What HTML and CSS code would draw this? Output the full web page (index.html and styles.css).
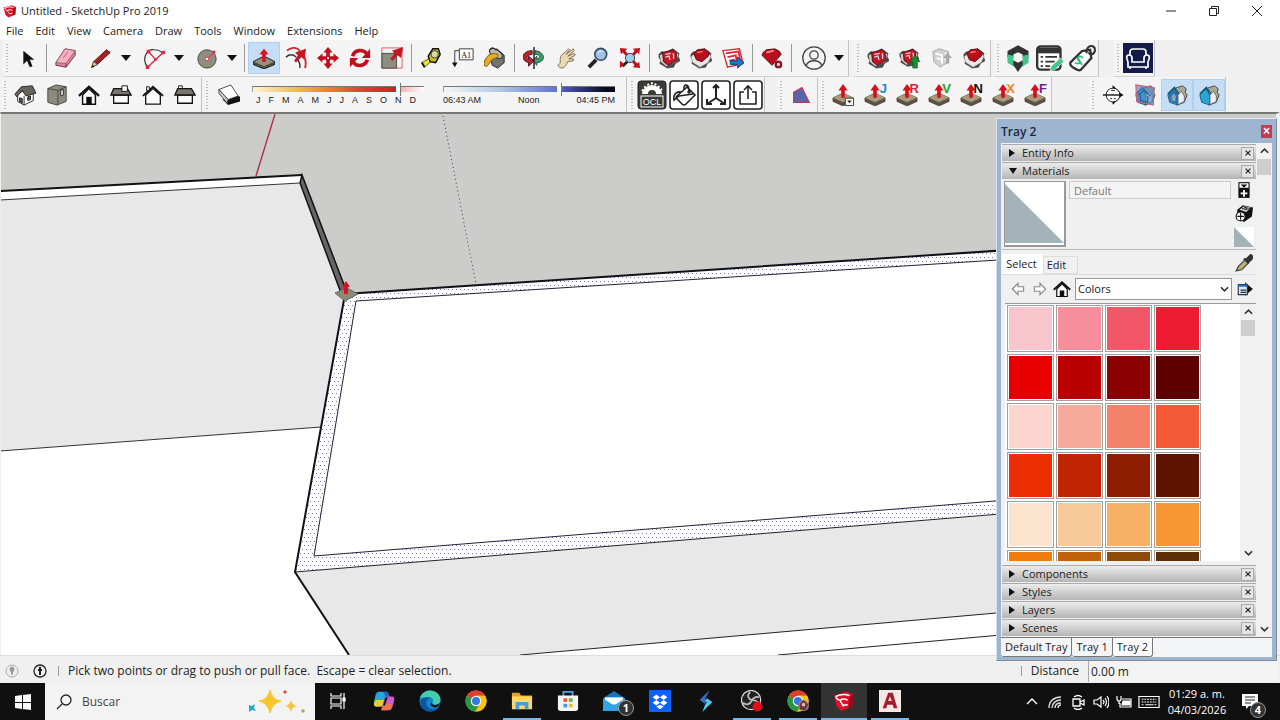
FILE: index.html
```html
<!DOCTYPE html>
<html lang="en">
<head>
<meta charset="utf-8">
<title>Untitled - SketchUp Pro 2019</title>
<link rel="stylesheet" href="styles.css">
</head>
<body>
<svg class="defs" aria-hidden="true">
  <symbol id="push" viewBox="0 0 24 24">
    <path d="M1 15l11-5 11 5v4l-11 5-11-5z" fill="#5e5342" stroke="#3c3427" stroke-width=".6"/>
    <path d="M1 15l11-5 11 5-11 5z" fill="#a8987c"/>
    <path d="M12 0l5 7h-3v8h-4V7H7z" fill="#d3111c"/>
  </symbol>
  <symbol id="warehouse" viewBox="0 0 24 24">
    <path d="M1 8l3-3 4 1 8-4 7 5-1 3 2 5-5 3-2 4-7 1-3-2-5-3 1-3-2-4z" fill="#4a4a4a" stroke="#333" stroke-width=".6"/>
    <path d="M2 9l4-2 12-3 4 4-2 8-11 5-6-5z" fill="#d2cfcc"/>
    <path d="M5 6l12-3 3 3v9l-9 5-5-4z" fill="#c01625" stroke="#5b0b12"/>
    <path d="M8 8l6-1M8 11l4-1 1 4M16 7l1 1v5" stroke="#f6d5d8" stroke-width="1.500" fill="none"/>
  </symbol>
  <symbol id="gem" viewBox="0 0 24 24">
    <path d="M1 8l3-3 4 1 8-4 7 5-1 3 2 5-5 3-2 4-7 1-3-2-5-3 1-3-2-4z" fill="#4a4a4a" stroke="#333" stroke-width=".6"/>
    <path d="M1 11l4-4 13-2 5 5-3 7-9 5-8-5z" fill="#e8e8e8" stroke="#777" stroke-width=".6"/>
    <path d="M4 7l4-4 8-1 5 4-1 4-7 6-6-2z" fill="#b80e1e" stroke="#5b0b12"/>
    <path d="M8 6l6-1" stroke="#f77" stroke-width="1.500"/>
  </symbol>
  <symbol id="home" viewBox="0 0 24 24">
    <path d="M5 12v10h14V12l-7-7z" fill="#fff" stroke="#111" stroke-width="1.600"/>
    <path d="M1 13L12 3l11 10" fill="none" stroke="#111" stroke-width="2.400"/>
    <path d="M9 22v-8h6v8z" fill="#111"/>
  </symbol>
  <symbol id="elevation" viewBox="0 0 24 24">
    <path d="M4 12h16v9H4z" fill="#fff" stroke="#111" stroke-width="1.400"/>
    <path d="M4 5h15l4 7H1z" fill="#77776c" stroke="#111" stroke-width="1.400"/>
  </symbol>
  <symbol id="section-house" viewBox="0 0 24 24">
    <path d="M9 5l9-3 4 3-1 4 2 3-3 8-8 3-2-9z" fill="#aaa794" stroke="#444"/>
    <path d="M12 13l5-5 3 5v6l-8 4z" fill="#eee" stroke="#444" stroke-width=".7"/>
    <path d="M2 12l7-7 4 8v10l-9-3z" fill="#2ba6d3" stroke="#135d80"/>
    <path d="M2 11l7-7 5 7" fill="none" stroke="#135d80" stroke-width="2"/>
  </symbol>
  <symbol id="chrome" viewBox="0 0 24 24">
    <circle cx="12" cy="12" r="11.500" fill="#fbc116"/>
    <path d="M12 12L2 6.300A11.500 11.500 0 0 1 22 6.300H12z" fill="#e33b2e"/>
    <path d="M12 12L2 6.300A11.500 11.500 0 0 0 11 23.500L17 15z" fill="#279847"/>
    <path d="M12 6.300h10a11.500 11.500 0 0 1-11 17.200l6-8.700z" fill="#fbc116"/>
    <circle cx="12" cy="12" r="5.700" fill="#fff"/><circle cx="12" cy="12" r="4.400" fill="#3477e3"/>
  </symbol>
  <symbol id="sketchup" viewBox="0 0 24 24">
    <path d="M1 6l14-4 7 3-1 13-12 5-5-5z" fill="#e01028"/>
    <path d="M18 8l4-3-1 13-4 2z" fill="#9c0716"/>
    <path d="M3 7c4-2 9-3 15-1M3 7c1 4 4 4 5 4 3-2 6-1 8 0M8 11c0 4 3 4 3 6 2-1 3-1 5-1" fill="none" stroke="#fff" stroke-width="1.600"/>
  </symbol>
  <symbol id="x" viewBox="0 0 10 10"><path d="M2 2l6 6M8 2L2 8" stroke="#222" stroke-width="1.500"/></symbol>
  <symbol id="caret" viewBox="0 0 12 8"><path d="M1 1h10L6 7z" fill="#111"/></symbol>
  <symbol id="up" viewBox="0 0 10 8"><path d="M1 6l4-4 4 4" fill="none" stroke="#333" stroke-width="1.800"/></symbol>
  <symbol id="down" viewBox="0 0 10 8"><path d="M1 2l4 4 4-4" fill="none" stroke="#333" stroke-width="1.800"/></symbol>
</svg>

<header class="titlebar">
  <svg class="app-icon"><use href="#sketchup"/></svg>
  <span class="title">Untitled - SketchUp Pro 2019</span>
  <div class="window-buttons">
    <button aria-label="Minimize"><svg viewBox="0 0 10 10"><path d="M0 5h10" stroke="#222"/></svg></button>
    <button aria-label="Restore"><svg viewBox="0 0 10 10" fill="none" stroke="#222"><path d="M.5 2.500h7v7h-7zM2.500 2.500v-2h7v7h-2"/></svg></button>
    <button aria-label="Close"><svg viewBox="0 0 10 10"><path d="M0 0l10 10M10 0L0 10" stroke="#222"/></svg></button>
  </div>
</header>
<nav class="menubar">
  <button>File</button><button>Edit</button><button>View</button><button>Camera</button><button>Draw</button><button>Tools</button><button>Window</button><button>Extensions</button><button>Help</button>
</nav>

<div class="toolrow">
  <div class="group">
    <button class="tool" aria-label="Select"><svg viewBox="0 0 24 24"><path d="M8 4v15l4-4 3 7 3-1-3-7h5z" fill="#111"/></svg></button>
    <i class="sep"></i>
    <button class="tool" aria-label="Eraser"><svg viewBox="0 0 24 24"><path d="M1 17L11 2l11 2v5L12 22 1 20z" fill="#e0829b" stroke="#653542"/><path d="M1 17L11 2l11 2-10 14z" fill="#f7b0c2" stroke="#7d4654" stroke-width=".7"/><path d="M9 12l5-7" stroke="#ba5571"/><path d="M12 18v4" stroke="#653542"/></svg></button>
    <div class="split"><button class="tool" aria-label="Line"><svg viewBox="0 0 24 24"><path d="M2 22l2-6L18 3l4 3L8 19z" fill="#aa2027" stroke="#3d1412"/><path d="M2 22l2-6 4 3z" fill="#ead3a4" stroke="#333" stroke-width=".6"/><path d="M1 23l2-3 2 1z" fill="#111"/></svg></button><button class="drop" aria-label="Line tools"><svg><use href="#caret"/></svg></button></div>
    <div class="split"><button class="tool" aria-label="Arc"><svg viewBox="0 0 24 24" fill="none"><path d="M5 22C-2 13 4 2 12 3c5 0 7 1 10 4" stroke="#333" stroke-width="1.300"/><path d="M5 22L22 6M6 5l8 9" stroke="#d42a3f" stroke-width="1.500"/><path d="M3 20h4v4H3zM20 4h4v4h-4zM4 3h4v4H4zM12 12h3v3h-3z" fill="#e12b45"/></svg></button><button class="drop" aria-label="Arc tools"><svg><use href="#caret"/></svg></button></div>
    <div class="split"><button class="tool" aria-label="Circle"><svg viewBox="0 0 24 24"><circle cx="12" cy="13" r="10" fill="#8d8e80" stroke="#44453d"/><path d="M12 13l8-7" stroke="#f04454" stroke-width="1.500"/><circle cx="12" cy="13" r="2" fill="#fff" stroke="#e12b45"/><path d="M18 4h3v3h-3z" fill="#e12b45"/></svg></button><button class="drop" aria-label="Shape tools"><svg><use href="#caret"/></svg></button></div>
    <i class="sep"></i>
    <button class="tool on" aria-label="Push/Pull"><svg viewBox="0 0 24 24"><path d="M0 16l12-6 12 6v3l-12 5-12-5z" fill="#4c4c40" stroke="#222"/><path d="M1 16l11-5 11 5-11 5z" fill="#92927f"/><path d="M12 2l5 6h-3v8h-4V8H7z" fill="#dc1220"/></svg></button>
    <button class="tool" aria-label="Offset"><svg viewBox="0 0 24 24" fill="none"><path d="M2 4C8-1 14 1 16 4M21 10c2 4 2 8 1 13" stroke="#cf2638" stroke-width="2"/><path d="M1 11c5-4 9-2 11 0M14 14c2 3 3 6 2 9" stroke="#333" stroke-width="1.600"/><path d="M10 15l4-6-3-3 12-4-2 12-3-3-6 6z" fill="#c51423"/></svg></button>
    <button class="tool" aria-label="Move"><svg viewBox="0 0 24 24" fill="#c40d1c"><path d="M12 0l5 6h-3v4h4V7l6 5-6 5v-3h-4v4h3l-5 6-5-6h3v-4H6v3l-6-5 6-5v3h4V6H7z"/><path d="M11 11h2v2h-2z" fill="#fff"/></svg></button>
    <button class="tool" aria-label="Rotate"><svg viewBox="0 0 24 24" fill="none" stroke="#c40d1c" stroke-width="4"><path d="M4 10c2-7 11-8 15-3M20 14c-2 7-11 8-15 3"/><path d="M23 2v10h-9zM1 22V12h9z" fill="#c40d1c" stroke="none"/></svg></button>
    <button class="tool" aria-label="Scale"><svg viewBox="0 0 24 24"><path d="M1 1h22v22H1z" fill="none" stroke="#dd5360"/><path d="M1 7h16v16H1z" fill="#8d8e80" stroke="#44453d"/><path d="M10 13l5-6-3-3 12-4-2 12-4-3-5 6z" fill="#c51423"/></svg></button>
    <i class="sep"></i>
    <button class="tool" aria-label="Tape Measure"><svg viewBox="0 0 24 24"><path d="M2 17l9-5 2 3-8 7z" fill="#f0e51b" stroke="#555"/><path d="M9 10l5-8 6 0 2 6-5 9-6-1z" fill="#c9c225" stroke="#111" stroke-width="1.600"/><circle cx="16" cy="8" r="4" fill="#dedaa5" stroke="#333"/><path d="M2 17l3 5" stroke="#111" stroke-width="2"/></svg></button>
    <button class="tool" aria-label="Text"><svg viewBox="0 0 24 24"><path d="M9 4H3v15" fill="none" stroke="#333"/><path d="M0 17h6l-3 5z" fill="#111"/><path d="M8 2h15v12H8z" fill="#fff" stroke="#333"/><text x="10" y="12" class="a1">A1</text></svg></button>
    <button class="tool" aria-label="Paint Bucket"><svg viewBox="0 0 24 24"><path d="M6 8l8-6 8 7v8l-7 6-6-3z" fill="#74756a" stroke="#222"/><ellipse cx="13" cy="7" rx="8" ry="4" fill="#b9b9ac" stroke="#222" transform="rotate(32 13 7)"/><path d="M15 8C8 5 0 10 0 20c5 4 5-4 10-7 4-1 6-2 5-5z" fill="#e7aa24" stroke="#7b590c"/><path d="M6 6c0-6 5-7 7-2" fill="none" stroke="#222"/></svg></button>
    <i class="sep"></i>
    <button class="tool" aria-label="Orbit"><svg viewBox="0 0 24 24" fill="none"><path d="M10 4C-2 4-3 15 6 17v4l6-6-6-5v3C3 12 4 9 10 8z" fill="#b92332" stroke="#471018"/><path d="M13 4c12 1 12 13 2 13v3l-4-5 4-5v3c5-1 4-5-2-5z" fill="#3c9c6a" stroke="#1d4d35"/><path d="M12 0v24" stroke="#222" stroke-width="1.600"/></svg></button>
    <button class="tool" aria-label="Pan"><svg viewBox="0 0 24 24"><path d="M3 20c5-2 1-7 4-11l8-7 1 1-4 5 8-6 1 2-7 6 7-3 1 2-7 4 5 0v2l-6 1c-2 4-3 7-8 7z" fill="#ead9af" stroke="#766b50"/></svg></button>
    <button class="tool" aria-label="Zoom"><svg viewBox="0 0 24 24"><path d="M2 22l8-8" stroke="#222" stroke-width="4"/><circle cx="15" cy="8" r="6.500" fill="#9cc3e4" stroke="#34495c" stroke-width="1.700"/><path d="M12 7c1-2 3-3 5-2" stroke="#fff" fill="none"/></svg></button>
    <button class="tool" aria-label="Zoom Extents"><svg viewBox="0 0 24 24"><path d="M4 21l6-6" stroke="#222" stroke-width="3"/><path d="M1 1l8 1-2 2 3 4-2 2-4-4-2 2zM23 1l-8 1 2 2-3 4 2 2 4-4 2 2zM23 23l-8-1 2-2-3-4 2-2 4 4 2-2zM1 23v-8l4 3-1 3z" fill="#c01223"/><circle cx="12" cy="12" r="5" fill="#9fd0df" stroke="#335"/></svg></button>
    <i class="sep"></i>
    <button class="tool" aria-label="3D Warehouse"><svg><use href="#warehouse"/></svg></button>
    <button class="tool" aria-label="Extension Warehouse"><svg><use href="#gem"/></svg></button>
    <button class="tool" aria-label="Send to LayOut"><svg viewBox="0 0 24 24"><path d="M1 4l18-2 4 16-17 4z" fill="#fff" stroke="#d8283b" stroke-width="1.500"/><path d="M4 7l14-2 2 10M6 11l9-2 1 6M8 15l5-1 1 5" fill="none" stroke="#d8283b" stroke-width="2"/><path d="M9 15h8v-4l7 6-7 6v-4H9z" fill="#1878c9" stroke="#0d4270"/></svg></button>
    <i class="sep"></i>
    <button class="tool" aria-label="Extension Manager"><svg viewBox="0 0 24 24"><path d="M1 9q1-4 5-6l9-1q6 2 7 6L12 20z" fill="#b80e1e" stroke="#5b0b12"/><path d="M6 6l8-2" stroke="#f88" stroke-width="2"/><circle cx="19" cy="19" r="3" fill="#ddd" stroke="#8e1320" stroke-width="2.500"/></svg></button>
    <i class="sep"></i>
    <div class="split"><button class="tool" aria-label="Account"><svg class="mid" viewBox="0 0 24 24" fill="none" stroke="#444" stroke-width="1.300"><circle cx="12" cy="12" r="11.200"/><circle cx="12" cy="9" r="4.200"/><path d="M4 20c2-7 14-7 16 0"/></svg></button><button class="drop" aria-label="Account menu"><svg><use href="#caret"/></svg></button></div>
  </div>
  <div class="group gap-s">
    <button class="tool" aria-label="Get Models"><svg><use href="#warehouse"/></svg></button>
    <button class="tool" aria-label="Share Model"><svg viewBox="0 0 24 24"><use href="#warehouse" width="22" height="22"/><path d="M17 9l6 7h-3v7h-5v-7h-3z" fill="#159031" stroke="#0a4a19" stroke-width=".6"/></svg></button>
    <button class="tool" aria-label="Share Component"><svg viewBox="0 0 24 24"><path d="M2 5l7-3 10 3-1 12-8 5-7-6z" fill="#d0d0d0" stroke="#aaa"/><path d="M5 7l7 2v9M6 12l6 2M16 6v10" stroke="#fff" stroke-width="2" fill="none"/><path d="M18 6l5 6h-3v6h-4v-6h-3z" fill="#aaa"/></svg></button>
    <button class="tool" aria-label="Extension Warehouse"><svg><use href="#gem"/></svg></button>
  </div>
  <div class="group gap-xs">
    <button class="tool" aria-label="Quantifier"><svg class="big" viewBox="0 0 24 24"><path d="M12 1l9 5v6h-5V9l-4-2-4 2v3H3V6z" fill="#333"/><path d="M3 9l5 1v5l3 3v3l-8-5zM21 9l-5 1v5l-3 3v3l8-5z" fill="#42c58a"/><path d="M8 14l4 2 4-2v4l-4 6-4-6z" fill="#333"/></svg></button>
    <button class="tool" aria-label="Report"><svg class="big" viewBox="0 0 24 24"><rect x="1" y="2" width="20" height="20" rx="3" fill="#fff" stroke="#333" stroke-width="2"/><path d="M1 3h20v5H1z" fill="#333"/><path d="M4 11h2M8 11h10M4 15h2M8 15h8M4 19h2M8 19h4" stroke="#333" stroke-width="1.500"/><path d="M12 23l1-4 8-7 3 3-8 7z" fill="#42c58a" stroke="#eee" stroke-width=".6"/></svg></button>
    <button class="tool" aria-label="Costs"><svg class="big" viewBox="0 0 24 24" fill="none"><path d="M2 16L12 6l7-1 1 7-9 10c-2 2-10-3-9-6z" fill="#fff" stroke="#333" stroke-width="2"/><path d="M16 8c-1-8 8-8 7-2-1 4-5 3-5 1" stroke="#333" stroke-width="1.800"/><path d="M13 12c-3-3-6 0-4 2s1 4-3 2M8 11l4 7" stroke="#2dbd7d" stroke-width="1.500"/></svg></button>
  </div>
  <div class="group gap-m">
    <button class="tool" aria-label="Furniture"><svg class="huge" viewBox="0 0 30 30"><path d="M0 0h30v30H0z" fill="#151b49"/><path d="M7 12V9q0-3 3-3h10q3 0 3 3v3M9 19v-4q0-3-3-3t-2 4l1 3v5h20v-5l1-3q1-4-2-4t-3 3v4zM7 24v2M23 24v2" fill="none" stroke="#fff" stroke-width="1.700"/></svg></button>
  </div>
</div>

<div class="toolrow second">
  <div class="group">
    <button class="tool" aria-label="Iso"><svg viewBox="0 0 24 24"><path d="M4 11v8l7 4 10-5v-8l-8-4z" fill="#fff" stroke="#222"/><path d="M1 11l7-8 12-1 4 8-11 3-4-6-6 7z" fill="#66665d" stroke="#222"/><path d="M11 13v10M6 15l3 1v5l-3-2zM15 14l3-1v4l-3 1z" fill="#555" stroke="#222"/></svg></button>
    <button class="tool" aria-label="Top"><svg viewBox="0 0 24 24"><path d="M2 5l9-4 11 2v16l-10 4-10-3z" fill="#8b8b7e" stroke="#44443c"/><path d="M2 5l11 2v16M13 7l9-4" fill="none" stroke="#44443c"/><path d="M16 7l3-1v6l-3 1z" fill="#ddd" stroke="#333"/></svg></button>
    <button class="tool" aria-label="Front"><svg><use href="#home"/></svg></button>
    <button class="tool" aria-label="Right"><svg viewBox="0 0 24 24"><use href="#elevation"/><path d="M13 2h6v6h-6z" fill="#fff" stroke="#111"/></svg></button>
    <button class="tool" aria-label="Back"><svg viewBox="0 0 24 24"><path d="M4 12v10h16V12l-8-7z" fill="#fff" stroke="#111" stroke-width="1.400"/><path d="M1 13L12 3l11 10" fill="none" stroke="#111" stroke-width="2"/><path d="M5 3h3v4H5z" fill="#fff" stroke="#111"/></svg></button>
    <button class="tool" aria-label="Left"><svg viewBox="0 0 24 24"><path d="M5 2h4v4H5z" fill="#fff" stroke="#111"/><use href="#elevation"/></svg></button>
  </div>
  <div class="group">
    <button class="tool shadow" aria-label="Shadows"><svg viewBox="0 0 24 24"><path d="M5 17l6 6 13-4v-5l-6-3z" fill="#111"/><path d="M1 6l13-5 8 12-11 4z" fill="#fff" stroke="#444"/><path d="M1 6v4l9 11 1-4z" fill="#ccc" stroke="#444"/></svg></button>
    <div class="slider">
      <input class="months" type="range" min="0" max="100" value="86" aria-label="Date">
      <div class="ticks"><span>J</span><span>F</span><span>M</span><span>A</span><span>M</span><span>J</span><span>J</span><span>A</span><span>S</span><span>O</span><span>N</span><span>D</span></div>
    </div>
    <div class="slider">
      <input class="hours" type="range" min="0" max="100" value="68" aria-label="Time">
      <div class="ticks"><span>06:43 AM</span><span>Noon</span><span>04:45 PM</span></div>
    </div>
  </div>
  <div class="group">
    <button class="tool" aria-label="OCL"><svg class="huge" viewBox="0 0 30 30"><rect x="1" y="1" width="28" height="28" rx="3" fill="#3a3b36" stroke="#222"/><path d="M5 14a10 9 0 0 1 20 0z" fill="#fff"/><path d="M5 11l3-4 4-3 4-1 5 3 4 4" fill="none" stroke="#fff" stroke-width="2" stroke-dasharray="2 2"/><path d="M11 14a4 4 0 0 1 8 0z" fill="#3a3b36"/><rect x="4" y="16" width="22" height="11" fill="#3a3b36" stroke="#fff"/><text x="15" y="25" class="ocl">OCL</text></svg></button>
    <button class="tool" aria-label="Material bucket"><svg class="huge" viewBox="0 0 30 30" fill="none" stroke="#222" stroke-width="1.600"><rect x="1" y="1" width="28" height="28" rx="3" fill="#fff"/><path d="M8 16L18 7l8 8-9 9q-2 2-4 0l-5-5q-2-1 0-3zM15 9c-1-5 5-6 5 2M12 12c-5-1-8 3-7 8l5-4 14-2"/><circle cx="20" cy="12" r="1"/></svg></button>
    <button class="tool" aria-label="Axes"><svg class="huge" viewBox="0 0 30 30" fill="none" stroke="#222" stroke-width="2"><rect x="1" y="1" width="28" height="28" rx="3" fill="#fff" stroke-width="1.600"/><path d="M15 5v13l-9 6M15 18l9 6M12 8l3-3 3 3M6 19v5h5M24 19v5h-5"/></svg></button>
    <button class="tool" aria-label="Export"><svg class="huge" viewBox="0 0 30 30" fill="none" stroke="#222" stroke-width="1.600"><rect x="1" y="1" width="28" height="28" rx="3" fill="#fff"/><path d="M11 12H7v12h16V12h-4M15 19V6M11 10l4-4 4 4"/></svg></button>
  </div>
  <div class="group gap-m">
    <button class="tool" aria-label="Face"><svg viewBox="0 0 24 24"><path d="M4 9l9-5 8 16H4z" fill="#5467aa" stroke="#bd3657" stroke-width="1.300"/></svg></button>
  </div>
  <div class="group">
    <button class="tool" aria-label="Joint push pull"><svg viewBox="0 0 24 24"><use href="#push"/><path d="M14.500 15.500h9v8h-9z" fill="#fff" stroke="#333"/><path d="M16.500 18h5l-2.500 3z" fill="#222"/></svg></button>
    <button class="tool key j" aria-label="Joint"><svg><use href="#push"/></svg><b>J</b></button>
    <button class="tool key r" aria-label="Round"><svg><use href="#push"/></svg><b>R</b></button>
    <button class="tool key v" aria-label="Vector"><svg><use href="#push"/></svg><b>V</b></button>
    <button class="tool key n" aria-label="Normal"><svg><use href="#push"/></svg><b>N</b></button>
    <button class="tool key o" aria-label="Extrude"><svg><use href="#push"/></svg><b>X</b></button>
    <button class="tool key f" aria-label="Follow"><svg><use href="#push"/></svg><b>F</b></button>
  </div>
  <div class="group gap-l">
    <button class="tool" aria-label="Section Plane"><svg viewBox="0 0 24 24" fill="none" stroke="#111"><path d="M12 2l10 10-10 10z" fill="#111"/><circle cx="12" cy="12" r="7.500" fill="#fff"/><path d="M1 12h22" stroke-width="1.500"/><path d="M10 7h4M9 16h2M13 16h2"/></svg></button>
    <button class="tool" aria-label="Display Section Planes"><svg viewBox="0 0 24 24"><use href="#section-house"/><path d="M2 1l20 3-1 19-18-4z" fill="#4f8bc9aa" stroke="#ce5d7c" stroke-width="1.300"/><path d="M5 12l6-5 7 6M7 12v6l8 2v-7" fill="none" stroke="#235b94" stroke-width="1.200"/></svg></button>
    <button class="tool on" aria-label="Display Section Cuts"><svg viewBox="0 0 24 24"><use href="#section-house"/><path d="M3 12l6-6 4 7v9l-8-3z" fill="#2b6cab"/><path d="M6 13l3-3 2 4-1 5-4-1z" fill="#8aa3b5"/></svg></button>
    <button class="tool on" aria-label="Display Section Fill"><svg><use href="#section-house"/></svg></button>
  </div>
</div>

<main class="workspace">
  <svg class="scene" viewBox="1 114 1275 541" preserveAspectRatio="xMinYMin slice" role="img" aria-label="Model">
    <defs><pattern id="dots" width="4" height="8" patternUnits="userSpaceOnUse"><path d="M0 1h1v1H0zM2 5h1v1H2z" fill="#7c7cb4"/></pattern></defs>
    <path d="M0 114h1280v541H0z" fill="#cccccb"/>
    <path d="M275 114l-19 62" stroke="#b02a40" stroke-width="1.300"/>
    <path d="M443 116l33 168" stroke="#34345c" stroke-dasharray="1 3"/>
    <path d="M0 191l302-16 43 120 935-62v422H0z" fill="#fff"/>
    <path d="M0 200l300-17 44 112-23 132L0 451z" fill="#e8e8e8"/>
    <path d="M302 175l44 115-5 3-41-110z" fill="#666" stroke="#111" stroke-width="1.500"/>
    <path d="M0 191l302-16" stroke="#111" stroke-width="2"/>
    <path d="M0 200l300-17M0 451l321-24" stroke="#333" fill="none"/>
    <path d="M345 294l935-62v258L295 572z" fill="#fff"/>
    <path d="M345 294l935-62v258L295 572zM356 301l-42 255 966-78V242z" fill="url(#dots)" fill-rule="evenodd"/>
    <path d="M356 301l924-59M356 301l-42 255 966-78" fill="none" stroke="#223"/>
    <path d="M295 572l985-81v97l-760 67H349z" fill="#e8e8e8"/>
    <path d="M295 572l985-81M520 655l760-67M778 655l502-45" stroke="#222" fill="none"/>
    <path d="M1280 232l-935 62-50 278 54 83" fill="none" stroke="#101018" stroke-width="2"/>
    <path d="M335 293l12-5 11 6-13 7z" fill="#8c8b78" stroke="#66665a"/>
    <path d="M346 281l4 6h-2v7h-4v-7h-2z" fill="#d5122a"/>
  </svg>

  <aside class="tray">
    <div class="tray-title"><b>Tray 2</b><button aria-label="Close tray">×</button></div>
    <div class="tray-main">
      <div class="panels">
        <div class="panel-head"><button class="toggle"><i class="tri"></i>Entity Info</button><button class="close" aria-label="Close Entity Info"><svg><use href="#x"/></svg></button></div>
        <div class="panel-head"><button class="toggle"><i class="tri open"></i>Materials</button><button class="close" aria-label="Close Materials"><svg><use href="#x"/></svg></button></div>
        <section class="materials">
          <div class="current">
            <svg class="preview" viewBox="0 0 60 62" preserveAspectRatio="none"><path d="M0 0h60v62H0z" fill="#fff"/><path d="M0 2l60 58H0z" fill="#a3b3b9"/></svg>
            <input class="name" aria-label="Material name" value="Default">
            <div class="side">
              <button aria-label="Secondary pane"><svg viewBox="0 0 16 16"><path d="M3 1h10v14H3z" fill="#111"/><path d="M4 2h8v4H4z" fill="#fff"/><path d="M5 3h6L8 6z" fill="#111"/><path d="M8 8v6M5 11h6" stroke="#fff" stroke-width="1.600"/></svg></button>
              <button aria-label="Create material"><svg viewBox="0 0 16 16"><path d="M2 5l5-4 9 2-1 8-7 5-6-4z" fill="#111"/><path d="M4 5l4-3 6 1-4 4z" fill="#ddd"/><path d="M6 4l5 1M8 3l5 1" stroke="#333"/><circle cx="5" cy="11" r="4" fill="#fff" stroke="#111"/><path d="M5 8v6M2 11h6" stroke="#111"/></svg></button>
              <button aria-label="Set default"><svg class="def" viewBox="0 0 20 20"><path d="M0 0h20v20H0z" fill="#fff"/><path d="M0 0l20 20H0z" fill="#a3b3b9"/></svg></button>
            </div>
          </div>
          <div class="tabs">
            <button class="tab active">Select</button><button class="tab">Edit</button>
            <button class="icon" aria-label="Sample paint"><svg viewBox="0 0 16 16"><path d="M1 15l2-4 6-6 3 3-6 6z" fill="#b8b071" stroke="#444"/><path d="M8 4l4 4M10 5l4-4 2 2-4 4z" fill="#333" stroke="#333" stroke-width="2"/></svg></button>
          </div>
          <div class="navrow">
            <button class="icon" aria-label="Back"><svg viewBox="0 0 16 16"><path d="M3 8l5-5v3h5v4H8v3z" fill="#fff" stroke="#888"/></svg></button>
            <button class="icon" aria-label="Forward"><svg viewBox="0 0 16 16"><path d="M13 8L8 3v3H3v4h5v3z" fill="#fff" stroke="#888"/></svg></button>
            <button class="icon" aria-label="In Model"><svg><use href="#home"/></svg></button>
            <div class="combo"><select aria-label="Library"><option>Colors</option></select><svg><use href="#down"/></svg></div>
            <button class="icon" aria-label="Details"><svg viewBox="0 0 16 16"><path d="M8 2l7 6-7 6z" fill="#111"/><path d="M2 4h8v9H2z" fill="#dce9f6" stroke="#234"/><path d="M2 4h8v2H2z" fill="#2a6bb0"/><path d="M4 9h5M4 11h5" stroke="#234"/></svg></button>
          </div>
          <div class="library">
            <div class="swatches">
              <button style="background-color:#f9c5cc"></button><button style="background-color:#f68e9c"></button><button style="background-color:#f15768"></button><button style="background-color:#ed1c32"></button>
              <button style="background-color:#e80000"></button><button style="background-color:#b90000"></button><button style="background-color:#8b0000"></button><button style="background-color:#5c0000"></button>
              <button style="background-color:#fcd5cf"></button><button style="background-color:#f8aa9a"></button><button style="background-color:#f48268"></button><button style="background-color:#f15a35"></button>
              <button style="background-color:#ec2e00"></button><button style="background-color:#be2500"></button><button style="background-color:#8d1c00"></button><button style="background-color:#5e1200"></button>
              <button style="background-color:#fce5cc"></button><button style="background-color:#f9ca99"></button><button style="background-color:#f8b067"></button><button style="background-color:#f79633"></button>
              <button style="background-color:#ef7c0d"></button><button style="background-color:#c0620a"></button><button style="background-color:#8f4a08"></button><button style="background-color:#5e2f05"></button>
            </div>
            <div class="scroll"><svg><use href="#up"/></svg><i></i><svg><use href="#down"/></svg></div>
          </div>
        </section>
        <div class="panel-head"><button class="toggle"><i class="tri"></i>Components</button><button class="close" aria-label="Close Components"><svg><use href="#x"/></svg></button></div>
        <div class="panel-head"><button class="toggle"><i class="tri"></i>Styles</button><button class="close" aria-label="Close Styles"><svg><use href="#x"/></svg></button></div>
        <div class="panel-head"><button class="toggle"><i class="tri"></i>Layers</button><button class="close" aria-label="Close Layers"><svg><use href="#x"/></svg></button></div>
        <div class="panel-head"><button class="toggle"><i class="tri"></i>Scenes</button><button class="close" aria-label="Close Scenes"><svg><use href="#x"/></svg></button></div>
      </div>
      <div class="scroll"><svg><use href="#up"/></svg><i></i><svg><use href="#down"/></svg></div>
    </div>
    <div class="tray-tabs"><button>Default Tray</button><button>Tray 1</button><button class="active">Tray 2</button></div>
  </aside>
</main>

<footer class="status">
  <svg viewBox="0 0 14 14"><circle cx="7" cy="7" r="6" fill="none" stroke="#aaa"/><path d="M5 5a2 2 0 1 1 4 0c0 2-2 3-2 6 0-3-2-4-2-6z" fill="#999" stroke="#999"/></svg>
  <svg viewBox="0 0 14 14"><circle cx="7" cy="7" r="6" fill="none" stroke="#222" stroke-width="1.300"/><circle cx="7" cy="4" r="1.200" fill="#222"/><path d="M5 6h4M7 6v5" stroke="#222" stroke-width="2"/></svg>
  <i class="bar"></i>
  <span class="hint">Pick two points or drag to push or pull face.&nbsp; Escape = clear selection.</span>
  <i class="bar"></i>
  <label for="vcb">Distance</label>
  <input id="vcb" value="0.00 m">
</footer>

<div class="taskbar">
  <button class="start" aria-label="Start"><svg viewBox="0 0 16 16"><path d="M0 2l7-1v7H0zM8 1l8-1v8H8zM0 9h7v6l-7-1zM8 9h8v7l-8-1z" fill="#fff"/></svg></button>
  <div class="search">
    <svg class="lens" viewBox="0 0 16 16" fill="none" stroke="#222" stroke-width="1.300"><circle cx="10" cy="6" r="5"/><path d="M6 10l-5 5"/></svg>
    <input aria-label="Buscar" placeholder="Buscar">
    <svg class="sparkle" viewBox="0 0 58 24"><path d="M22 0q2 10 11 11-9 2-11 12-2-10-11-12 9-1 11-11z" fill="#f8c52b" stroke="#f8c52b" stroke-linejoin="round"/><path d="M43 10q1 5 6 6-5 1-6 6-1-5-6-6 5-1 6-6z" fill="#f4c63d"/><path d="M1 15l3 1 3-2-1 4 2 3-4-1-3 2v-4z" fill="#23a9cf"/><circle cx="37" cy="2" r="1.700" fill="#df5036"/><circle cx="55" cy="21" r="1.700" fill="#80bd4c"/></svg>
  </div>
  <button class="app view" aria-label="Task View"><svg class="small" viewBox="0 0 16 16" fill="none" stroke="#fff" stroke-width="1.200"><path d="M1 0v3h10V0M1 16v-3h10v3M1 5h10v6H1zM14 0v16"/><path d="M13 5h2v3h-2z" fill="#fff"/></svg></button>
  <button class="app" aria-label="Copilot"><svg viewBox="0 0 24 24"><path d="M6 2h9l-5 16H4q-4 0-3-5l2-8q1-3 3-3z" fill="#29a4dc"/><path d="M3 11l-2 4q0 4 5 3h4l2-7z" fill="#e8cb35"/><path d="M15 2l3 5h3q3 0 2 5l-2 7q-1 3-4 3H9l4-13z" fill="#cf5bd0"/><path d="M9 22l2-7h10l-1 5q-1 2-4 2z" fill="#ef724c"/><path d="M11 2h4q2 0 3 5h-4z" fill="#295fc9"/><path d="M14 8h2l-3 9h-2z" fill="#101010"/></svg></button>
  <button class="app" aria-label="Edge"><svg viewBox="0 0 24 24"><circle cx="12" cy="12" r="11.500" fill="#1683cf"/><path d="M1 9C4-3 22-2 23.500 10c0 7-9 7-9 4 2-2 1-6-4-6-4 0-8 0-9.500 1z" fill="#40cfab"/><path d="M8 13c-1 6 5 10 12 7-5 6-17 4-19-6C1 9 9 6 13 9c-3 0-5 2-5 4z" fill="#0c55a3"/><path d="M14 14c1 4 6 3 9 0-1 3-3 5-5 5-4 0-6-2-5-5z" fill="#101010"/></svg></button>
  <button class="app" aria-label="Chrome"><svg><use href="#chrome"/></svg></button>
  <button class="app run" aria-label="File Explorer"><svg viewBox="0 0 24 24"><path d="M1 3h8l2 3h12v5H1z" fill="#e0a527"/><path d="M1 7h22v14H1z" fill="#ffd869"/><path d="M5 13h14v8h-4v-4H9v4H5z" fill="#4b9cda"/></svg></button>
  <button class="app" aria-label="Store"><svg viewBox="0 0 24 24"><path d="M7 7V2h10v5" fill="none" stroke="#41ace4" stroke-width="2"/><path d="M1 6h22v14q0 3-3 3H4q-3 0-3-3z" fill="#f5f5f5"/><path d="M7 9h4v4H7z" fill="#ec5838"/><path d="M13 9h4v4h-4z" fill="#6fb03e"/><path d="M7 15h4v4H7z" fill="#3ba2df"/><path d="M13 15h4v4h-4z" fill="#f4b62a"/></svg></button>
  <button class="app badge-host" aria-label="Mail"><svg viewBox="0 0 24 24"><path d="M0 9l12-8 12 8v14H0z" fill="#1275bf"/><path d="M2 8h20v8H2z" fill="#fff"/><path d="M0 9l12 8 12-8v14H0z" fill="#31a4e6"/></svg><span class="badge">1</span></button>
  <button class="app" aria-label="Dropbox"><svg viewBox="0 0 24 24"><path d="M0 0h24v24H0z" fill="#0b62f4"/><path d="M8 5l4 3-4 3-4-3zM16 5l4 3-4 3-4-3zM8 11l4 3-4 3-4-3zM16 11l4 3-4 3-4-3zM12 16l4 2-4 3-4-3z" fill="#fff"/></svg></button>
  <button class="app" aria-label="Sync"><svg viewBox="0 0 24 24"><path d="M16 0L5 11l6 4 2-4-2-1z" fill="#386fbd"/><path d="M13 9l6 4L8 24l3-8 2-3-2-1z" fill="#55c5ed"/></svg></button>
  <button class="app run" aria-label="OBS"><svg viewBox="0 0 24 24"><circle cx="11" cy="11" r="10.500" fill="#222" stroke="#ddd" stroke-width="1.300"/><path d="M10 2c-4 4-2 8 2 9 5 0 8 2 7 7M12 11c-2 5-6 6-10 3M12 11c2-3 5-4 8-3" fill="none" stroke="#bbb" stroke-width="2"/><circle cx="18" cy="18" r="5.500" fill="#e00c17"/></svg></button>
  <button class="app run" aria-label="Chrome profile"><svg viewBox="0 0 24 24"><use href="#chrome"/><circle cx="18" cy="17" r="6" fill="#a17e7d"/><path d="M14 21v-6l4-4 5 5-3 6z" fill="#66313b"/><circle cx="18" cy="16" r="2" fill="#dbb7a2"/></svg></button>
  <button class="app run active" aria-label="SketchUp"><svg><use href="#sketchup"/></svg></button>
  <button class="app run" aria-label="AutoCAD"><svg viewBox="0 0 24 24"><path d="M0 0h24v24H0z" fill="#f5e9e8"/><path d="M4 20L10 3h5l5 17h-4l-1-4H9l-1 4zM10 12h4l-2-5z" fill="#a51d2c" fill-rule="evenodd"/></svg></button>
  <div class="systray">
    <button aria-label="Hidden icons"><svg viewBox="0 0 16 16" fill="none" stroke="#fff" stroke-width="1.400"><path d="M3 10l5-5 5 5"/></svg></button>
    <button aria-label="Network"><svg viewBox="0 0 16 16" fill="none" stroke="#ddd" stroke-width="1.400"><path d="M2 14C2 7 7 3 14 3M5 14c0-5 4-8 9-8M8 14c0-3 2-5 6-5M11 14c0-2 1-3 3-3"/></svg></button>
    <button aria-label="Meet now"><svg viewBox="0 0 16 16" fill="none" stroke="#fff" stroke-width="1.300"><path d="M3 5h7v7H3zM10 8l4-2v5l-4-2M4 3q4-3 8 0M4 14q4 3 8 0"/></svg></button>
    <button aria-label="Volume"><svg viewBox="0 0 16 16" fill="none" stroke="#fff" stroke-width="1.200"><path d="M1 6h3l4-3v10l-4-3H1zM10 6q2 2 0 4M12 4q3 4 0 8M14 2q4 6 0 12"/></svg></button>
    <button aria-label="Battery"><svg viewBox="0 0 16 16" fill="none" stroke="#fff" stroke-width="1.200"><path d="M6 5h9v8H4V9M1 2v3q0 2 2 2t2-2V2M3 7v3"/><path d="M7 7h7v4H6z" fill="#fff"/></svg></button>
    <button class="wide" aria-label="Keyboard"><svg viewBox="0 0 24 16" fill="none" stroke="#fff" stroke-width="1.300"><path d="M1 2h22v12H1z"/><path d="M4 5h16M4 8h16" stroke-dasharray="2 1"/><path d="M4 11h2M8 11h9M18 11h2"/></svg></button>
    <div class="clock"><span>01:29 a. m.</span><span>04/03/2026</span></div>
    <button class="notes badge-host" aria-label="Notifications"><svg viewBox="0 0 16 16"><path d="M0 0h16v12H7l-3 3v-3H0z" fill="#fff"/><path d="M3 3h10M3 6h10M3 9h6" stroke="#222"/></svg><span class="badge">4</span></button>
  </div>
</div>
</body>
</html>
```
FILE: styles.css
```css
* { box-sizing: border-box; }
html, body { height: 100%; }
body {
  margin: 0;
  display: flex;
  flex-direction: column;
  overflow: hidden;
  background: #f0f0f0;
  color: #222;
  font: 12px/16px "Open Sans", "Noto Sans", sans-serif;
}
button { margin: 0; padding: 0; border: 0; background: none; color: inherit; font: inherit; }
input, select { font: inherit; color: inherit; min-width: 0; }
svg { display: block; flex: none; }
.defs { position: absolute; width: 0; height: 0; }

.titlebar { display: flex; align-items: center; height: 22px; background: #fff; font-size: 11px; }
.app-icon { width: 14px; height: 14px; margin: 0 4px 0 3px; }
.window-buttons { display: flex; margin-left: auto; }
.window-buttons button { display: grid; place-items: center; width: 43px; height: 20px; }
.window-buttons svg { width: 10px; height: 10px; }
.window-buttons button:last-child { margin-right: 2px; }
.menubar { display: flex; gap: 12px; height: 18px; padding-left: 6px; background: #fff; font-size: 11px; line-height: 18px; }

.toolrow { display: flex; height: 37px; padding-left: 3px; }
.second { height: 35px; padding-left: 1px; }
.group {
  display: flex;
  align-items: center;
  height: 100%;
  margin-right: 1px;
  border-right: 1px solid #c4c4c4;
  border-bottom: 1px solid #d2d2d2;
  background: #f4f4f4;
}
.second .group { border-bottom: 0; }
.group::before { content: ""; width: 2px; height: 28px; margin: 0 3px; background: repeating-linear-gradient(#bbb 0 1px, transparent 1px 3px); }
.gap-xs { margin-left: 2px; }
.gap-s { margin-left: 4px; }
.gap-m { margin-left: 14px; }
.second .gap-m { margin-left: 11px; }
.gap-l { margin-left: 36px; }
.tool { display: grid; place-items: center; width: 32px; height: 32px; }
.tool svg { width: 22px; height: 22px; }
.tool .mid { width: 24px; height: 24px; }
.tool .big { width: 28px; height: 28px; }
.tool .huge { width: 30px; height: 30px; }
.on { background: #c5def5; border: 1px solid #aed0ee; }
.sep { width: 1px; height: 28px; margin: 0 3px; background: #999; }
.split { display: flex; padding-left: 3px; }
.drop { display: grid; place-items: center; width: 18px; }
.drop svg { width: 12px; height: 8px; }
.a1 { font: 9px "Liberation Serif", serif; fill: #111; }
.ocl { font: 9px "Liberation Sans", sans-serif; fill: #fff; text-anchor: middle; }
.key { position: relative; }
.key b { position: absolute; top: 3px; right: 4px; font: bold 13px/13px "Liberation Sans", sans-serif; }
.j b { color: #168ec9; } .r b { color: #d7263a; } .v b { color: #19a12f; }
.n b { color: #111; } .o b { color: #ed831c; } .f b { color: #731a91; }

.shadow { width: 36px; }
.slider { width: 172px; margin: 0 11px 0 5px; }
.slider + .slider { margin-left: 8px; }
.slider input { display: block; width: 100%; height: 8px; margin: 0; appearance: none; background: none; }
.slider input::-webkit-slider-runnable-track { height: 6px; border-top: 1px solid #777; border-left: 1px solid #999; }
.months::-webkit-slider-runnable-track { background: linear-gradient(90deg, #fff3d0, #e9ac3d 32%, #dd4532 62%, #cb2028 84%, #f6b4b5 87%, #fff); }
.hours::-webkit-slider-runnable-track { background: linear-gradient(90deg, #f4f6f4, #b5c8e3 32%, #5f73d6 66%, #4650b2 72%, #080818 95%); }
.slider input::-webkit-slider-thumb { appearance: none; width: 5px; height: 13px; margin-top: -4px; border-right: 1px solid #777; background: #fff; }
.ticks { display: flex; justify-content: space-between; padding: 2px 8px 0 4px; font: 9px/10px "Liberation Sans", sans-serif; }
.hours + .ticks { padding: 2px 0 0; }

.workspace { position: relative; z-index: 1; flex: 1; min-height: 0; border: solid #777; border-width: 2px 4px 0 1px; border-left-color: #eee; border-right-color: #f0f0f0; }
.scene { width: 100%; height: 100%; }

.tray {
  position: absolute;
  top: 4px;
  right: -1px;
  bottom: -6px;
  width: 281px;
  display: flex;
  flex-direction: column;
  padding: 1px 4px 3px 4px;
  border: 1px solid #7e8ca0;
  border-left-color: #d7e0ea;
  border-top-color: #e5edf4;
  background: #9db5cf;
}
.tray-title { display: flex; justify-content: space-between; align-items: center; height: 23px; color: #172a44; }
.tray-title b { font-weight: 600; }
.tray-title button { width: 11px; height: 13px; background: #c23b50; color: #fff; font: bold 12px/11px "Liberation Sans", sans-serif; }
.tray-main { display: flex; flex: 1; min-height: 0; padding-left: 1px; background: #f0f0f0; }
.panels { display: flex; flex: 1; flex-direction: column; min-width: 0; padding-top: 1px; font-size: 11px; }
.panel-head { display: flex; flex: none; align-items: center; height: 17px; margin-bottom: 1px; padding-right: 2px; border-top: 1px solid #aaa; background: linear-gradient(#ececec, #b5b5b5); }
.toggle { display: flex; flex: 1; align-items: center; gap: 7px; padding-left: 7px; text-align: left; }
.tri { border: solid transparent; border-width: 4px 0 4px 6px; border-left-color: #111; }
.tri.open { border-width: 6px 4px 0; border-top-color: #111; border-left-color: transparent; margin-right: -2px; }
.close { display: grid; place-items: center; width: 13px; height: 13px; border: 1px solid #aaa; background: #e4e4e4; }
.close svg { width: 8px; height: 8px; }
.scroll { display: flex; flex: none; flex-direction: column; align-items: center; width: 16px; padding: 4px 0; background: #f1f1f1; }
.scroll svg { width: 9px; height: 8px; }
.scroll i { width: 14px; height: 16px; margin: 4px 0 auto; background: #cdcdcd; }

.materials { display: flex; flex: 1; flex-direction: column; min-height: 0; margin-bottom: 4px; }
.current { display: flex; gap: 3px; height: 70px; padding: 1px 2px 0; border-bottom: 1px solid #bbb; }
.preview { width: 62px; height: 66px; border: 1px solid #999; border-right-width: 2px; border-bottom-width: 2px; }
.name { flex: 1; height: 18px; padding: 0 4px; border: 1px solid #ccc; background: #f4f4f4; color: #777; }
.side { display: flex; flex-direction: column; align-items: center; gap: 5px; }
.side svg, .icon svg { width: 18px; height: 18px; }
.side .def { width: 20px; height: 20px; }
.tabs { display: flex; align-items: flex-end; height: 25px; border-bottom: 1px solid #ddd; }
.tab { width: 35px; height: 18px; padding-right: 8px; border: 1px solid #ddd; }
.tab.active { width: 41px; height: 20px; padding-right: 2px; background: #fff; border-color: #fff; }
.tabs .icon { margin: 0 3px 2px auto; }
.navrow { display: flex; align-items: center; height: 28px; padding: 0 2px 0 7px; gap: 4px; }
.combo { display: grid; flex: 1; align-items: center; }
.combo select, .combo svg { grid-area: 1 / 1; }
.combo select { width: 100%; height: 22px; padding: 0 2px; appearance: none; border: 1px solid #999; border-radius: 0; background: #fff; }
.combo svg { justify-self: end; width: 9px; height: 8px; margin-right: 3px; pointer-events: none; }
.library { display: flex; flex: 1; min-height: 0; margin-left: 3px; border-top: 1px solid #999; background: #fff; }
.swatches { display: grid; flex: 1; grid-template-columns: repeat(4, 47px); grid-auto-rows: 47px; gap: 2px; align-content: start; padding: 1px 2px; overflow: hidden; }
.swatches button { border: 1px solid #a0a0a0; padding: 1px; background-clip: content-box; }

.tray-tabs { display: flex; height: 20px; background: #f4f5f7; border-top: 1px solid #777; font-size: 11px; }
.tray-tabs button { height: 19px; padding: 0 4px; border: solid #777; border-width: 0 1px 1px 0; border-radius: 0 0 3px 3px; }
.tray-tabs .active { background: #fff; }

.status { display: flex; align-items: center; height: 28px; border-top: 1px solid #ddd; padding: 3px 2px 0 5px; }
.status svg { width: 14px; height: 14px; margin-right: 14px; }
.status svg + svg { margin-right: 7px; }
.bar { width: 1px; height: 10px; margin: 0 9px 0 4px; background: #999; }
.hint { flex: 1; }
.status input { width: 190px; height: 22px; margin-left: 9px; padding: 0 2px; border: 0; border-left: 1px solid #aaa; background: #f3f3f3; }

.taskbar { display: flex; height: 37px; background: #101010; color: #fff; }
.start { display: grid; place-items: center; width: 45px; }
.start svg { width: 16px; height: 16px; }
.search { display: flex; align-items: center; width: 270px; padding: 0 9px 0 11px; background: #f3f3f3; color: #333; }
.lens { width: 16px; height: 16px; }
.search input { flex: 1; padding: 0 0 0 10px; border: 0; background: none; }
.search input::placeholder { color: #444; opacity: 1; }
.sparkle { width: 58px; height: 24px; }
.app { display: grid; place-items: center; width: 46px; border-bottom: 2px solid transparent; }
.app svg { width: 22px; height: 22px; }
.app .small { width: 16px; height: 16px; }
.run { background: linear-gradient(#76b9ed, #76b9ed) center bottom / 38px 2px no-repeat border-box; }
.active.run { background-color: #333; background-size: 46px 2px; }
.badge-host { position: relative; }
.badge { position: absolute; right: 3px; bottom: 2px; width: 16px; height: 16px; border: 1px solid #999; border-radius: 50%; background: #333; font: bold 11px/14px "Open Sans", sans-serif; text-align: center; }
.systray { display: flex; align-items: center; margin-left: auto; }
.systray button { display: grid; place-items: center; width: 23px; height: 37px; }
.systray svg { width: 16px; height: 16px; }
.systray .wide { width: 28px; }
.wide svg { width: 22px; height: 16px; }
.clock { display: flex; flex-direction: column; align-items: center; width: 68px; font-size: 11px; line-height: 16px; }
.systray .notes { width: 38px; margin-right: 11px; }
```
